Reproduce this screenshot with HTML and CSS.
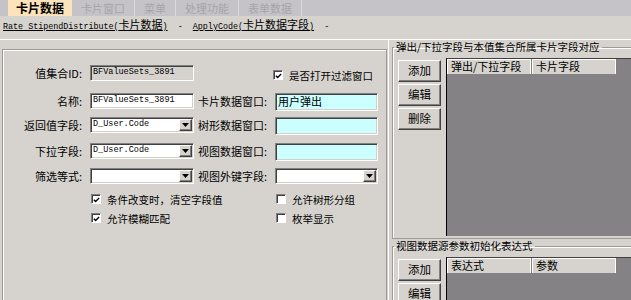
FILE: index.html
```html
<!DOCTYPE html>
<html lang="zh-CN">
<head>
<meta charset="utf-8">
<title>卡片数据</title>
<link rel="stylesheet" href="styles.css">
</head>
<body>
<div class="tabs">
  <div class="tab active">卡片数据</div>
  <div class="tab">卡片窗口</div>
  <div class="tab">菜单</div>
  <div class="tab">处理功能</div>
  <div class="tab">表单数据</div>
</div>
<div class="crumbs"><a class="link">Rate StipendDistribute(<span class="cjk">卡片数据</span>)</a><span class="sep">  -  </span><a class="link">ApplyCode(<span class="cjk">卡片数据字段</span>)</a><span class="sep">  -</span></div>
<div class="main">
  <div class="left">
    <fieldset class="form">
      <div class="grid">
        <div class="lbl">值集合ID:</div>
        <div class="field ro">BFValueSets_3891</div>
        <div></div>
        <div class="chk top"><span class="cb on"><svg viewBox="0 0 8 8" width="8" height="8"><path d="M1 3.6 L3 5.6 L7 1.6" fill="none" stroke="#000" stroke-width="1.6"/></svg></span>是否打开过滤窗口</div>

        <div class="lbl">名称:</div>
        <div class="field">BFValueSets_3891</div>
        <div class="lbl">卡片数据窗口:</div>
        <div class="field cyan cjkval">用户弹出</div>

        <div class="lbl">返回值字段:</div>
        <div class="field combo"><span class="val">D_User.Code</span><span class="drop"><svg viewBox="0 0 7 4" width="7" height="4"><path d="M0 0 H7 L3.5 4 Z" fill="#000"/></svg></span></div>
        <div class="lbl">树形数据窗口:</div>
        <div class="field cyan"></div>

        <div class="lbl">下拉字段:</div>
        <div class="field combo"><span class="val">D_User.Code</span><span class="drop"><svg viewBox="0 0 7 4" width="7" height="4"><path d="M0 0 H7 L3.5 4 Z" fill="#000"/></svg></span></div>
        <div class="lbl">视图数据窗口:</div>
        <div class="field cyan"></div>

        <div class="lbl">筛选等式:</div>
        <div class="field combo"><span class="val"></span><span class="drop"><svg viewBox="0 0 7 4" width="7" height="4"><path d="M0 0 H7 L3.5 4 Z" fill="#000"/></svg></span></div>
        <div class="lbl">视图外键字段:</div>
        <div class="field combo"><span class="val"></span><span class="drop"><svg viewBox="0 0 7 4" width="7" height="4"><path d="M0 0 H7 L3.5 4 Z" fill="#000"/></svg></span></div>

        <div></div>
        <div class="chk wide"><span class="cb on"><svg viewBox="0 0 8 8" width="8" height="8"><path d="M1 3.6 L3 5.6 L7 1.6" fill="none" stroke="#000" stroke-width="1.6"/></svg></span>条件改变时，清空字段值</div>
        <div class="chk"><span class="cb"></span>允许树形分组</div>

        <div></div>
        <div class="chk wide"><span class="cb on"><svg viewBox="0 0 8 8" width="8" height="8"><path d="M1 3.6 L3 5.6 L7 1.6" fill="none" stroke="#000" stroke-width="1.6"/></svg></span>允许模糊匹配</div>
        <div class="chk"><span class="cb"></span>枚举显示</div>
      </div>
    </fieldset>
  </div>
  <div class="right">
    <fieldset class="grp g1">
      <legend>弹出/下拉字段与本值集合所属卡片字段对应</legend>
      <div class="grp-body">
        <div class="btns">
          <div class="btn">添加</div>
          <div class="btn">编辑</div>
          <div class="btn">删除</div>
        </div>
        <div class="list tall">
          <div class="lh"><div class="col">弹出/下拉字段</div><div class="col">卡片字段</div></div>
        </div>
      </div>
    </fieldset>
    <fieldset class="grp g2">
      <legend>视图数据源参数初始化表达式</legend>
      <div class="grp-body">
        <div class="btns">
          <div class="btn">添加</div>
          <div class="btn">编辑</div>
        </div>
        <div class="list short">
          <div class="lh"><div class="col">表达式</div><div class="col">参数</div></div>
        </div>
      </div>
    </fieldset>
  </div>
</div>
</body>
</html>
```

FILE: styles.css
```css
html, body {
  margin: 0;
  overflow: hidden;
}
body {
  width: 631px;
  height: 300px;
  background: #d6d3ce;
  font-family: "Noto Sans CJK SC", "Liberation Sans", sans-serif;
  font-size: 11px;
  color: #000;
}

/* tabs */
.tabs {
  display: flex;
  height: 16px;
  background: #c5c3c7;
  padding-left: 8px;
}
.tab {
  padding: 0 9px;
  line-height: 16px;
  font-size: 11px;
  color: #a6a4a8;
  border-right: 1px solid #dcdadd;
}
.tab.active {
  background: #fde3bc;
  color: #000;
  font-weight: bold;
  font-size: 12px;
  padding: 0 8px;
  border-right: none;
}

/* breadcrumb links */
.crumbs {
  height: 23px;
  box-sizing: border-box;
  padding: 2px 0 0 3px;
  font-family: "Liberation Mono", monospace;
  font-size: 8.4px;
  line-height: 12px;
  white-space: pre;
}
.link {
  text-decoration: underline;
  color: #000;
}
.cjk {
  font-family: "Noto Sans CJK SC", sans-serif;
  font-size: 11px;
}

/* main */
.main {
  display: flex;
  height: 261px;
  border-top: 1px solid #fff;
}
.left {
  width: 388px;
  box-sizing: border-box;
  padding: 9px 1px 0 2px;
  display: flex;
  flex-direction: column;
}
.form {
  flex: 1;
  margin: 0;
  padding: 14px 0 0 0;
  min-width: 0;
  border: 1px solid #9d9b98;
  border-bottom: none;
  box-shadow: inset 1px 1px #fff;
}
.grid {
  display: grid;
  grid-template-columns: 87px 104px 81px 103px;
  grid-template-rows: 28px 24px 26px 25px 26px 19px 20px;
  align-items: start;
}
.lbl {
  height: 16px;
  line-height: 16px;
  margin-top: 1px;
  text-align: right;
  padding-right: 8px;
  white-space: nowrap;
}
.field {
  height: 16px;
  margin-top: 1px;
  box-sizing: border-box;
  border: 1px solid;
  border-color: #808080 #fff #fff #808080;
  box-shadow: inset 1px 1px #404040, inset -1px -1px #d4d0c8;
  background: #fff;
  font-family: "Liberation Mono", monospace;
  font-size: 8.5px;
  line-height: 13px;
  padding-left: 2px;
  white-space: nowrap;
  overflow: hidden;
}
.field.ro {
  background: #d6d3ce;
}
.field.cyan {
  height: 18px;
  background: #ccffff;
}
.field.cjkval {
  font-family: "Noto Sans CJK SC", sans-serif;
  font-size: 11px;
  line-height: 14px;
}
.combo {
  display: flex;
  padding-right: 1px;
}
.combo .val {
  flex: 1;
}
.drop {
  width: 13px;
  height: 12px;
  margin-top: 1px;
  box-sizing: border-box;
  background: #d6d3ce;
  border: 1px solid;
  border-color: #fff #404040 #404040 #fff;
  box-shadow: inset -1px -1px #808080;
  display: flex;
  align-items: center;
  justify-content: center;
}

/* checkboxes */
.chk {
  display: flex;
  align-items: center;
  gap: 6px;
  white-space: nowrap;
  height: 12px;
  font-size: 10.5px;
  margin-left: 1px;
}
.chk.top {
  margin-top: 5px;
  margin-left: -2px;
}
.chk.wide {
  grid-column: span 2;
}
.cb {
  width: 10px;
  height: 10px;
  box-sizing: border-box;
  background: #fff;
  border: 1px solid;
  border-color: #808080 #fff #fff #808080;
  box-shadow: inset 1px 1px #404040;
  display: flex;
  align-items: center;
  justify-content: center;
  padding: 1px 0 0 1px;
}
.cb svg {
  display: block;
}

/* right panel */
.right {
  flex: 1;
  overflow: hidden;
  box-sizing: border-box;
  padding: 1px 0 0 3px;
  border-left: 1px solid #fff;
}
.grp {
  margin: 0;
  padding: 5px 0 2px 5px;
  min-width: 0;
  border: 1px solid #9d9b98;
  border-right: none;
  box-shadow: inset 1px 1px #fff;
}
.grp.g2 {
  margin-top: 1px;
  border-bottom: none;
}
.grp legend {
  font-size: 10.5px;
  line-height: 12px;
  padding: 0 2px;
  margin-left: -4px;
}
.grp-body {
  display: flex;
  gap: 5px;
}
.btns {
  display: flex;
  flex-direction: column;
  gap: 2px;
  margin-top: 2px;
}
.btn {
  width: 43px;
  height: 22px;
  box-sizing: border-box;
  border: 1px solid;
  border-color: #fff #404040 #404040 #fff;
  box-shadow: inset -1px -1px #808080;
  background: #d6d3ce;
  text-align: center;
  line-height: 19px;
  font-size: 11.5px;
}
.list {
  flex: 1;
  background: #848285;
  border-top: 1px solid #404040;
  border-left: 1px solid #000;
}
.list.tall {
  height: 177px;
}
.list.short {
  height: 60px;
}
.lh {
  display: flex;
  height: 15px;
}
.col {
  width: 80px;
  padding-left: 4px;
  background: #d6d3ce;
  border-right: 1px solid #808080;
  box-shadow: inset 1px 1px #fff, inset -1px 0 #fff;
  line-height: 15px;
  font-size: 11px;
  white-space: nowrap;
  overflow: hidden;
}
```
